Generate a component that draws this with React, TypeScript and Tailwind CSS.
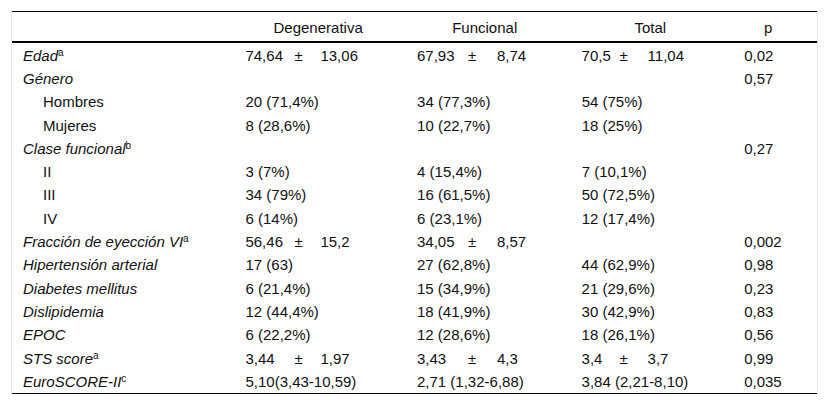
import React from 'react';

type Cell = string | [string, string];

type Row = {
  label: string;
  sup?: string;
  sub?: boolean;
  italic?: boolean;
  deg?: Cell;
  fun?: Cell;
  tot?: Cell;
  p?: string;
};

const rows: Row[] = [
  { label: 'Edad', sup: 'a', italic: true, deg: ['74,64', '13,06'], fun: ['67,93', '8,74'], tot: ['70,5', '11,04'], p: '0,02' },
  { label: 'Género', italic: true, p: '0,57' },
  { label: 'Hombres', sub: true, deg: '20 (71,4%)', fun: '34 (77,3%)', tot: '54 (75%)' },
  { label: 'Mujeres', sub: true, deg: '8 (28,6%)', fun: '10 (22,7%)', tot: '18 (25%)' },
  { label: 'Clase funcional', sup: 'b', italic: true, p: '0,27' },
  { label: 'II', sub: true, deg: '3 (7%)', fun: '4 (15,4%)', tot: '7 (10,1%)' },
  { label: 'III', sub: true, deg: '34 (79%)', fun: '16 (61,5%)', tot: '50 (72,5%)' },
  { label: 'IV', sub: true, deg: '6 (14%)', fun: '6 (23,1%)', tot: '12 (17,4%)' },
  { label: 'Fracción de eyección VI', sup: 'a', italic: true, deg: ['56,46', '15,2'], fun: ['34,05', '8,57'], p: '0,002' },
  { label: 'Hipertensión arterial', italic: true, deg: '17 (63)', fun: '27 (62,8%)', tot: '44 (62,9%)', p: '0,98' },
  { label: 'Diabetes mellitus', italic: true, deg: '6 (21,4%)', fun: '15 (34,9%)', tot: '21 (29,6%)', p: '0,23' },
  { label: 'Dislipidemia', italic: true, deg: '12 (44,4%)', fun: '18 (41,9%)', tot: '30 (42,9%)', p: '0,83' },
  { label: 'EPOC', italic: true, deg: '6 (22,2%)', fun: '12 (28,6%)', tot: '18 (26,1%)', p: '0,56' },
  { label: 'STS score', sup: 'a', italic: true, deg: ['3,44', '1,97'], fun: ['3,43', '4,3'], tot: ['3,4', '3,7'], p: '0,99' },
  { label: 'EuroSCORE-II', sup: 'c', italic: true, deg: '5,10(3,43-10,59)', fun: '2,71 (1,32-6,88)', tot: '3,84 (2,21-8,10)', p: '0,035' },
];

// value ± value, with the ± and the second value at fixed offsets per column
function Value({ cell, grid }: { cell?: Cell; grid: string }) {
  if (!cell) return null;
  if (typeof cell === 'string') return <span>{cell}</span>;
  return (
    <div className={`grid ${grid}`}>
      <span>{cell[0]}</span>
      <span>±</span>
      <span>{cell[1]}</span>
    </div>
  );
}

export default function App() {
  return (
    <div className="min-h-screen bg-white pt-[11px] pl-[11px] text-[15px] leading-[18px] text-[#111]" style={{ fontFamily: '"Liberation Sans", Arial, sans-serif' }}>
      <div className="w-[807px] border-l border-r border-[#e8e8e8]">
        <div className="border-t border-black">
          {/* header */}
          <div className="flex h-[31px] items-center pt-[2px] border-b-2 border-black">
            <div className="w-[234px]" />
            <div className="w-[172px] pr-[26px] text-center">Degenerativa</div>
            <div className="w-[165px] pr-[29px] text-center">Funcional</div>
            <div className="w-[163px] pr-[25px] text-center">Total</div>
            <div className="w-[73px] pr-[25px] text-center">p</div>
          </div>

          {/* body */}
          <div className="pt-[1px] border-b border-black">
            {rows.map((r) => (
              <div key={r.label} className="flex h-[23.3px] items-center">
                <div className={`w-[234px] ${r.sub ? 'pl-[31px]' : 'pl-[11px]'} ${r.italic ? 'italic' : ''}`}>
                  {r.label}
                  {r.sup && <sup className="text-[10px] not-italic leading-none">{r.sup}</sup>}
                </div>
                <div className="w-[172px]">
                  <Value cell={r.deg} grid="grid-cols-[49px_26px_1fr]" />
                </div>
                <div className="w-[165px]">
                  <Value cell={r.fun} grid="grid-cols-[51px_29px_1fr]" />
                </div>
                <div className="w-[163px]">
                  <Value cell={r.tot} grid="grid-cols-[38px_28px_1fr]" />
                </div>
                <div className="w-[73px]">{r.p}</div>
              </div>
            ))}
          </div>
        </div>
      </div>
    </div>
  );
}
